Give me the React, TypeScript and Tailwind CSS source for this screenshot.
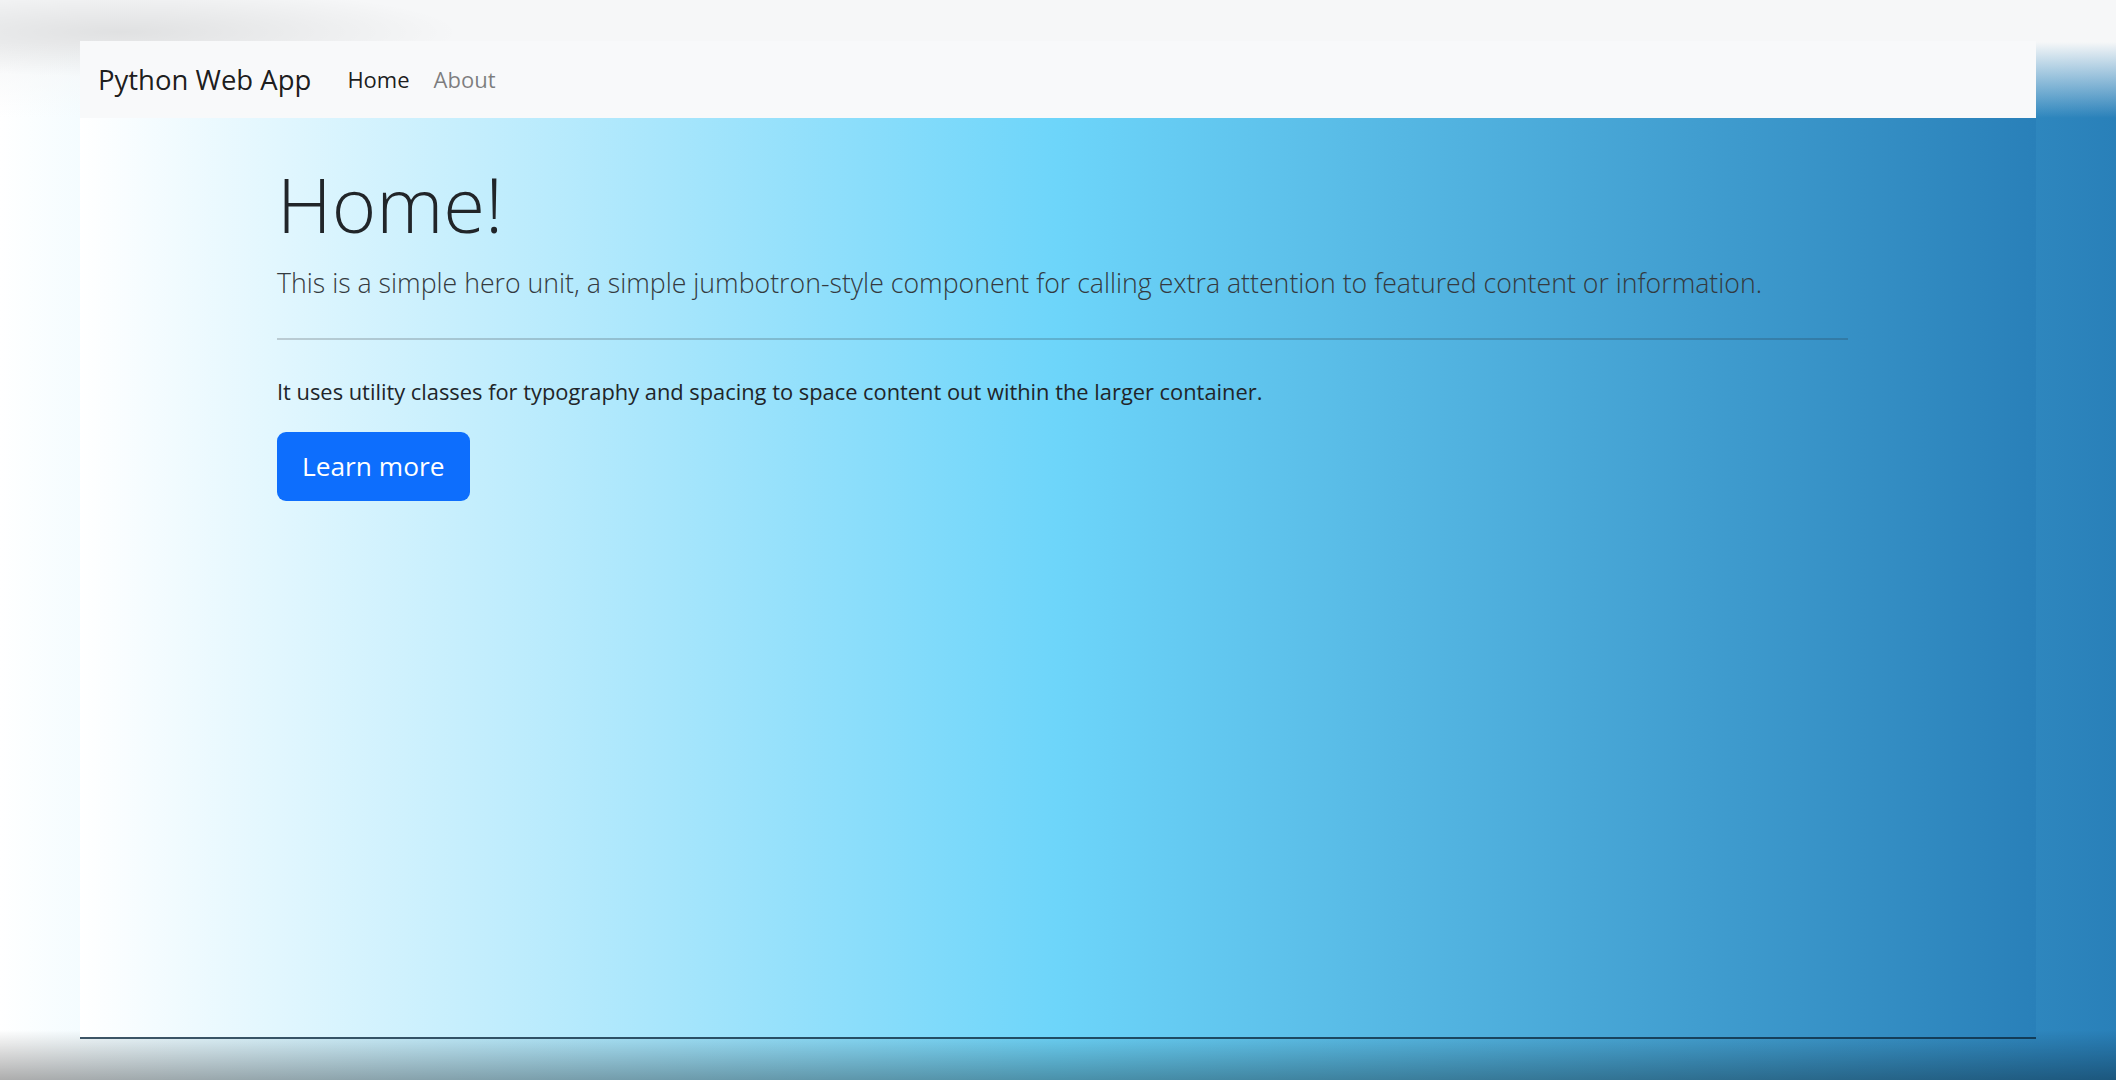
export default function App() {
  return (
    <div className="w-[2116px] h-[1080px] overflow-hidden pt-[41px] px-[80px] pb-[41px] font-['Open_Sans','Noto_Sans',sans-serif] bg-[radial-gradient(ellipse_340px_45px_at_120px_32px,rgba(0,0,0,0.09),transparent),linear-gradient(to_bottom,transparent_1030px,rgba(0,0,0,0.32)_1080px),linear-gradient(to_bottom,#f6f7f8_42px,rgba(246,247,248,0)_118px),linear-gradient(to_right,#ffffff,#6dd5fa_50%,#2980b9)]">
      {/* Browser window */}
      <div className="h-full flex flex-col bg-[linear-gradient(to_right,#ffffff,#6dd5fa_50%,#2980b9)] border-b-2 border-[#0c2b40]/80">
        {/* Navbar */}
        <nav className="h-[77px] shrink-0 bg-[#f8f9fa] flex items-center pl-[18px]">
          <a href="#" className="text-[27.5px] text-black/90 mr-[24px]">
            Python Web App
          </a>
          <ul className="flex">
            <li>
              <a href="#" className="px-[12px] text-[22px] text-black/90">
                Home
              </a>
            </li>
            <li>
              <a href="#" className="px-[12px] text-[22px] text-black/50">
                About
              </a>
            </li>
          </ul>
        </nav>

        {/* Hero */}
        <main className="ml-[197px] w-[1571px] pt-[41px]">
          <h1 className="text-[76px] leading-[90px] font-light text-[#212529]">Home!</h1>
          <p className="mt-[14px] text-[26.7px] leading-[40px] font-light text-[#343a40]">
            This is a simple hero unit, a simple jumbotron-style component for calling extra attention to featured content or information.
          </p>
          <hr className="mt-[35px] border-0 border-t-2 border-[#212529]/20" />
          <p className="mt-[34px] text-[21.85px] leading-[36px] text-[#212529]">
            It uses utility classes for typography and spacing to space content out within the larger container.
          </p>
          <button className="mt-[22px] h-[69px] px-[25px] rounded-[9px] bg-[#0d6efd] text-white text-[26.3px] leading-[45px]">
            Learn more
          </button>
        </main>
      </div>
    </div>
  );
}
